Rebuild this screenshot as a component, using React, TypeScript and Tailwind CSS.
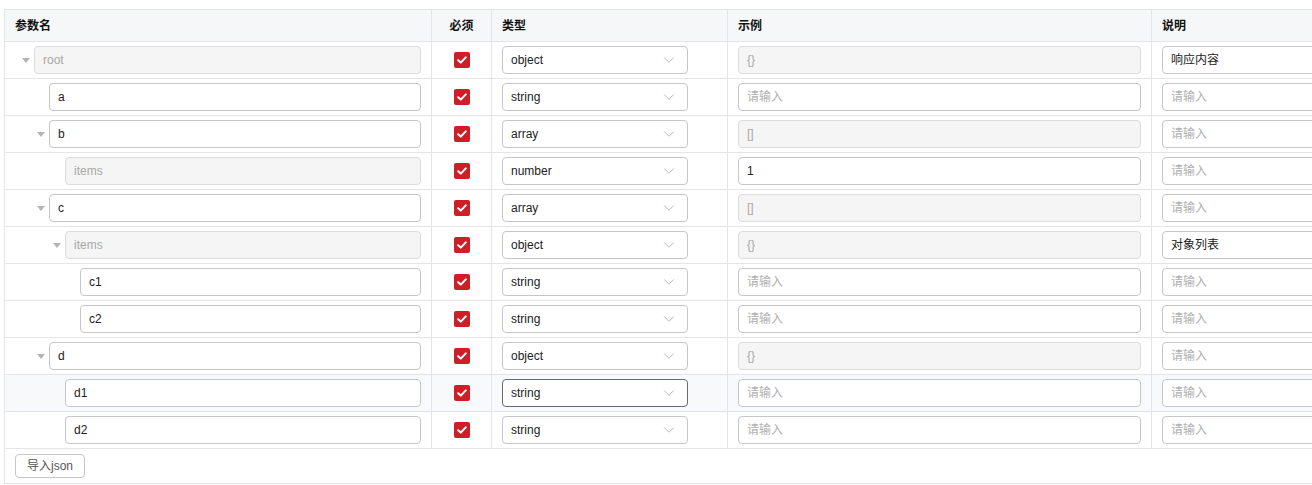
import { ChevronDown } from "lucide-react"

type Row = {
  name: string
  level: number
  expandable?: boolean
  lockedName?: boolean
  type: string
  example: string
  exampleLocked?: boolean
  desc: string
  hover?: boolean
  focusSelect?: boolean
}

const rows: Row[] = [
  { name: "root", level: 0, expandable: true, lockedName: true, type: "object", example: "{}", exampleLocked: true, desc: "响应内容" },
  { name: "a", level: 1, type: "string", example: "", desc: "" },
  { name: "b", level: 1, expandable: true, type: "array", example: "[]", exampleLocked: true, desc: "" },
  { name: "items", level: 2, lockedName: true, type: "number", example: "1", desc: "" },
  { name: "c", level: 1, expandable: true, type: "array", example: "[]", exampleLocked: true, desc: "" },
  { name: "items", level: 2, expandable: true, lockedName: true, type: "object", example: "{}", exampleLocked: true, desc: "对象列表" },
  { name: "c1", level: 3, type: "string", example: "", desc: "" },
  { name: "c2", level: 3, type: "string", example: "", desc: "" },
  { name: "d", level: 1, expandable: true, type: "object", example: "{}", exampleLocked: true, desc: "" },
  { name: "d1", level: 2, type: "string", example: "", desc: "", hover: true, focusSelect: true },
  { name: "d2", level: 2, type: "string", example: "", desc: "" },
]

const indents = ["pl-[29px]", "pl-[44px]", "pl-[60px]", "pl-[75px]"]

const grid = "grid grid-cols-[427px_60px_236px_424px_1fr]"

function TextBox({ value, locked }: { value: string; locked?: boolean }) {
  return (
    <div
      className={`h-[28px] w-full rounded-[4px] border px-[8px] flex items-center text-[12px] ${
        locked ? "bg-[#f5f5f5] border-[#dcdcdc] text-[#a8a8a8]" : "bg-white border-[#c6c6c6] text-[#222]"
      }`}
    >
      {value ? value : <span className="text-[#b0b0b0]">请输入</span>}
    </div>
  )
}

export default function App() {
  return (
    <div
      className="w-[1312px] h-[485px] overflow-hidden bg-white pt-[9px] pl-[4px]"
      style={{ fontFamily: '"Liberation Sans", Arial, "Noto Sans CJK SC", sans-serif' }}
    >
      <div className="w-[1420px] border-l border-t border-[#e3e5e9]">
        {/* header */}
        <div className={`${grid} h-[32px] bg-[#f6f7f9] border-b border-[#e3e5e9] text-[12px] font-bold text-[#111]`}>
          <div className="flex items-center pl-[10px] border-r border-[#e3e5e9]">参数名</div>
          <div className="flex items-center justify-center border-r border-[#e3e5e9]">必须</div>
          <div className="flex items-center pl-[10px] border-r border-[#e3e5e9]">类型</div>
          <div className="flex items-center pl-[10px] border-r border-[#e3e5e9]">示例</div>
          <div className="flex items-center pl-[10px]">说明</div>
        </div>

        {rows.map((r, i) => (
          <div
            key={i}
            className={`${grid} h-[37px] border-b border-[#e3e5e9] ${r.hover ? "bg-[#f8f9fb]" : "bg-white"}`}
          >
            <div className={`flex items-center pr-[10px] border-r border-[#e3e5e9] ${indents[r.level]}`}>
              <div className="relative w-full">
                {r.expandable && (
                  <span className="absolute left-[-12px] top-[12px] w-0 h-0 border-l-[4px] border-r-[4px] border-t-[5px] border-l-transparent border-r-transparent border-t-[#b4b4b4]" />
                )}
                <TextBox value={r.name} locked={r.lockedName} />
              </div>
            </div>
            <div className="flex items-center justify-center border-r border-[#e3e5e9]">
              <div className="w-[16px] h-[16px] rounded-[2px] bg-[#cc1f27] flex items-center justify-center">
                <svg width="10" height="8" viewBox="0 0 10 8" fill="none">
                  <path d="M1.2 4.2 L3.8 6.6 L8.8 1.4" stroke="white" strokeWidth="2" strokeLinecap="round" strokeLinejoin="round" />
                </svg>
              </div>
            </div>
            <div className="flex items-center pl-[10px] pr-[39px] border-r border-[#e3e5e9]">
              <div
                className={`h-[28px] w-full rounded-[4px] border bg-white pl-[8px] pr-[9px] flex items-center justify-between text-[12px] text-[#222] ${
                  r.focusSelect ? "border-[#6b6b6b]" : "border-[#c6c6c6]"
                }`}
              >
                <span>{r.type}</span>
                <ChevronDown size={18} strokeWidth={1} className="text-[#a0a0a0]" />
              </div>
            </div>
            <div className="flex items-center px-[10px] border-r border-[#e3e5e9]">
              <TextBox value={r.example} locked={r.exampleLocked} />
            </div>
            <div className="flex items-center pl-[10px] pr-[10px]">
              <TextBox value={r.desc} />
            </div>
          </div>
        ))}

        {/* footer */}
        <div className="h-[35px] border-b border-[#e3e5e9] flex items-center pl-[10px]">
          <button className="h-[24px] w-[70px] rounded-[4px] border border-[#c6c6c6] bg-white text-[12px] text-[#555]">
            导入json
          </button>
        </div>
      </div>
    </div>
  )
}
